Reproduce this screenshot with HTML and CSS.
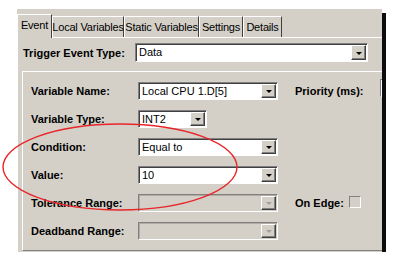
FILE: index.html
```html
<!DOCTYPE html>
<html>
<head>
  <link rel="stylesheet" href="styles.css">
</head>
<body>

<div class="window">
  <div class="tabs">
    <div class="tab tab-event active">Event</div>
    <div class="tab tab-local">Local Variables</div>
    <div class="tab tab-static">Static Variables</div>
    <div class="tab tab-settings">Settings</div>
    <div class="tab tab-details">Details</div>
  </div>

  <div class="page">
    <div class="row trigger">
      <span class="label">Trigger Event Type:</span>
      <div class="combo wide"><span class="field">Data</span><span class="btn"></span></div>
    </div>

    <div class="group">
      <div class="row">
        <span class="label">Variable Name:</span>
        <div class="combo"><span class="field">Local CPU 1.D[5]</span><span class="btn"></span></div>
        <span class="side-label">Priority (ms):</span>
        <span class="edit"></span>
      </div>
      <div class="row">
        <span class="label">Variable Type:</span>
        <div class="combo short"><span class="field">INT2</span><span class="btn"></span></div>
      </div>
      <div class="row">
        <span class="label">Condition:</span>
        <div class="combo"><span class="field">Equal to</span><span class="btn"></span></div>
      </div>
      <div class="row">
        <span class="label">Value:</span>
        <div class="combo"><span class="field">10</span><span class="btn"></span></div>
      </div>
      <div class="row">
        <span class="label">Tolerance Range:</span>
        <div class="combo off"><span class="field"></span><span class="btn"></span></div>
        <span class="side-label edge">On Edge:</span>
        <span class="check"></span>
      </div>
      <div class="row">
        <span class="label">Deadband Range:</span>
        <div class="combo off"><span class="field"></span><span class="btn"></span></div>
      </div>
    </div>
  </div>
</div>

<!-- red hand-drawn highlight over the form -->
<svg class="annot" width="402" height="268" viewBox="0 0 402 268">
  <ellipse cx="120" cy="167" rx="117" ry="43" fill="none" stroke="#e8262a" stroke-width="1.4"/>
</svg>

</body>
</html>
```

FILE: styles.css
```css
body {
  margin: 0;
  background: #fff;
  font: 11px "Liberation Sans", Arial, sans-serif;
  color: #000;
  position: relative;
}

.window {
  margin: 9px 0 0 17px;
  width: 365px;
  height: 243px;
  background: #d4d0c8;
  box-shadow: 4px 4px 0 #0c0c0c;
  overflow: hidden;
  display: flex;
  flex-direction: column;
}

/* tab strip */
.tabs {
  display: flex;
  align-items: flex-end;
  height: 28px;
  flex: none;
}

.tab {
  box-sizing: border-box;
  height: 21px;
  border: 1px solid;
  border-color: #fff #404040 transparent #fff;
  border-bottom: none;
  display: flex;
  align-items: center;
  justify-content: center;
  white-space: nowrap;
  letter-spacing: -0.2px;
  flex: none;
}

.tab-event { width: 35px; }
.tab-local { width: 72px; }
.tab-static { width: 75px; }
.tab-settings { width: 44px; }
.tab-details { width: 39px; }

.tab.active {
  height: 24px;
  padding-bottom: 3px;
  margin-bottom: -1px;
  background: #d4d0c8;
  position: relative;
}

/* tab page */
.page {
  flex: 1;
  display: flex;
  flex-direction: column;
  border-top: 1px solid #fff;
  border-left: 1px solid #fff;
  padding: 5px 0 0 5px;
}

.row {
  display: flex;
  align-items: center;
  height: 18px;
}

.row.trigger {
  height: 19px;
}

.label {
  font-weight: bold;
  width: 107px;
  flex: none;
  white-space: nowrap;
}

.trigger .label {
  width: 112px;
}

.group {
  flex: 1;
  margin: 9px -20px 1px -1px;
  padding: 10px 0 0 8px;
  border: 1px solid;
  border-color: #fff #808080 #808080 #fff;
  display: flex;
  flex-direction: column;
  gap: 10px;
}

/* combo box */
.combo {
  box-sizing: border-box;
  width: 140px;
  height: 18px;
  flex: none;
  display: flex;
  border: 1px solid;
  border-color: #808080 #fff #fff #808080;
  box-shadow: inset 1px 1px 0 #404040;
  background: #fff;
  padding: 1px;
}

.combo.wide {
  width: 233px;
  height: 19px;
}

.combo.short {
  width: 69px;
}

.combo .field {
  flex: 1;
  padding-left: 2px;
  line-height: 15px;
  white-space: nowrap;
  overflow: hidden;
}

.combo .btn {
  box-sizing: border-box;
  width: 15px;
  background: #d4d0c8;
  border: 1px solid;
  border-color: #fff #404040 #404040 #fff;
  box-shadow: inset -1px -1px 0 #808080;
  display: flex;
  align-items: center;
  justify-content: center;
}

.combo .btn::after {
  content: "";
  width: 0;
  height: 0;
  border-left: 3px solid transparent;
  border-right: 3px solid transparent;
  border-top: 3px solid #000;
  margin-top: 1px;
}

.combo.off {
  background: #d4d0c8;
  box-shadow: inset 1px 1px 0 #b0aca4;
}

.combo.off .btn::after {
  border-top-color: #a0a0a0;
}

.side-label {
  font-weight: bold;
  margin-left: 17px;
  width: 85px;
  flex: none;
  white-space: nowrap;
}

.side-label.edge {
  width: 54px;
}

.edit {
  box-sizing: border-box;
  width: 40px;
  height: 18px;
  flex: none;
  border: 1px solid;
  border-color: #808080 #fff #fff #808080;
  background: #fff;
  margin-top: -6px;
}

.check {
  box-sizing: border-box;
  width: 12px;
  height: 12px;
  flex: none;
  border: 1px solid;
  border-color: #808080 #fff #fff #808080;
  background: #d4d0c8;
  margin-top: -2px;
}

.annot {
  position: absolute;
  top: 0;
  left: 0;
  pointer-events: none;
}
```
